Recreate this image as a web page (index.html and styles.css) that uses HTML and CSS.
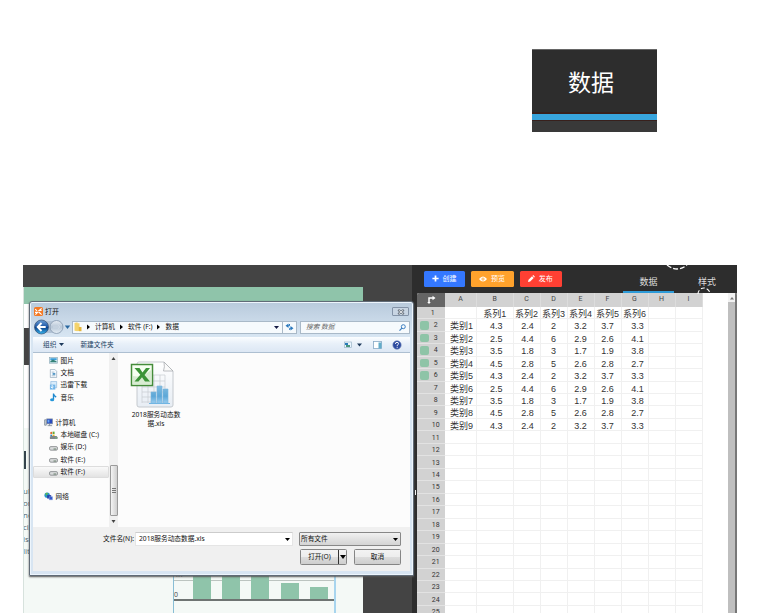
FILE: index.html
```html
<!DOCTYPE html>
<html>
<head>
<meta charset="utf-8">
<title>数据</title>
<link rel="stylesheet" href="styles.css">
</head>
<body>
<div class="callout"><div class="callout-label">数据</div><div class="callout-bar"></div></div>

<div class="app">
  <div class="canvas">
    <div class="page">
      <div class="band"></div>
      <div class="gap-a"></div>
      <div class="photo"><span></span></div>
      <div class="gap-b"></div>
      <div class="article">
        <div class="mark"></div>
        <div class="copy">ull<br>on<br>ne<br>ci,<br>is<br>lit</div>
        <div class="chart">
          <div class="plot">
            <span class="tick top">4K</span><span class="tick zero">0</span>
            <i class="b30"></i><i class="b30"></i><i class="b30"></i><i class="b16"></i><i class="b12"></i>
          </div>
        </div>
      </div>
    </div>
  </div>

  <div class="panel">
    <div class="topbar">
      <button class="btn blue"><svg width="7" height="7" viewBox="0 0 7 7"><path d="M3.5 .4v6.2M.4 3.5h6.2" stroke="#fff" stroke-width="1.7"/></svg>创建</button>
      <button class="btn orange"><svg width="8" height="6" viewBox="0 0 8 6"><path d="M0 3Q4-2 8 3Q4 8 0 3Z" fill="#fff"/><circle cx="4" cy="3" r="1.5" fill="#ffa22c"/><circle cx="4" cy="3" r=".7" fill="#fff"/></svg>预览</button>
      <button class="btn red"><svg width="7" height="7" viewBox="0 0 7 7"><path d="M0 7l.5-2.2L4 1.3l1.7 1.7-3.5 3.5zM4.5.8l.8-.7 1.6 1.6-.7.8z" fill="#fff"/></svg>发布</button>
      <div class="tab active">数据</div>
      <div class="tab plain">样式</div>
      <svg class="dashes" width="60" height="34" viewBox="0 0 60 34" fill="none" stroke="#fff"><path d="M7 0Q17 8 27 0" stroke-width="1.3" stroke-dasharray="5 2"/><path d="M38 29A6 6 0 0 1 50 29" stroke-width="1.1" stroke-dasharray="4 2"/></svg>
    </div>
    <div class="sheet-wrap">
      <div class="sheet" id="sheet"></div>
      <div class="scroll"><div class="scroll-up"><svg width="6" height="4" viewBox="0 0 6 4"><path d="M1 3.5L3 1l2 2.5z" fill="#777"/></svg></div><div class="thumb"></div></div>
    </div>
    <div class="grip"></div>
  </div>

  <div class="dialog">
    <div class="title"><svg width="9" height="9" viewBox="0 0 9 9"><rect width="9" height="9" rx="1.6" fill="#f47a25"/><path d="M1.2 2.2L3 3.8M7.6 1.4L5.2 3.4H7.6M1 5.4H3.6L1.4 7.6M4.8 5l2.8 2.6" stroke="#fff" stroke-width="1.1" fill="none"/></svg><span>打开</span>
      <div class="close"><svg width="8" height="6" viewBox="0 0 8 6"><path d="M1.2.8l5.6 4.4M6.8.8L1.2 5.2" stroke="#66707c" stroke-width="2.2"/><path d="M1.8 1.2l4.4 3.6M6.2 1.2L1.8 4.8" stroke="#fff" stroke-width=".8"/></svg></div>
    </div>
    <div class="nav">
      <svg class="arrows" width="39" height="16" viewBox="0 0 39 16">
        <defs><linearGradient id="ball" x2="0" y2="1"><stop stop-color="#6c9fd6"/><stop offset=".48" stop-color="#1d57a5"/><stop offset=".5" stop-color="#083a85"/><stop offset="1" stop-color="#37b6ef"/></linearGradient><linearGradient id="pale" x2="0" y2="1"><stop stop-color="#e7edf4"/><stop offset=".5" stop-color="#b8c7d7"/><stop offset="1" stop-color="#e5eef6"/></linearGradient></defs>
        <rect x="6" y="2" width="18" height="12" rx="6" fill="#b1c2d5"/>
        <circle cx="8.500" cy="8" r="7" fill="url(#ball)" stroke="#344d71" stroke-width=".7"/><path d="M8.500 4L4.700 8l3.800 4M5 8h7.700" stroke="#fff" stroke-width="1.9" fill="none"/>
        <circle cx="23.500" cy="8" r="6.500" fill="url(#pale)" stroke="#8497ad" stroke-width=".8"/><path d="M20 8h7M24.500 5.500L27 8l-2.500 2.500" stroke="#ced9e5" fill="none"/>
        <path d="M31.800 6.500h5.400L34.500 10z" fill="#28679f"/></svg>
      <div class="address"><svg width="8" height="10" viewBox="0 0 8 10"><path d="M.5 1l3-.8V9.2l-3-.5zM3.5 1.2h2V9h-2z" fill="#f4d36c"/><path d="M4.8 5h2.7v4.2H4.8z" fill="#e5b63d"/></svg><svg class="chev" width="3" height="6"><path d="M0 .5v5L3 3z"/></svg><span>计算机</span><svg class="chev" width="3" height="6"><path d="M0 .5v5L3 3z"/></svg><span>软件 (F:)</span><svg class="chev" width="3" height="6"><path d="M0 .5v5L3 3z"/></svg><span>数据</span><svg class="push" width="5" height="3"><path d="M0 0h5L2.5 3z" fill="#141a44"/></svg></div>
      <div class="refresh"><svg width="9" height="8" viewBox="0 0 9 8"><path d="M3.500 .5L.5 2.800l3 2.300zM5.500 3L8.500 5.200l-3 2.300z" fill="#2b79bd"/><path d="M2.500 2.800H4.500V1M6.500 5.200H4.700V7" fill="none" stroke="#2b79bd"/></svg></div>
      <div class="search"><em>搜索 数据</em><svg class="push" width="7" height="7" viewBox="0 0 7 7"><circle cx="4.3" cy="2.7" r="2" fill="none" stroke="#3e7fc1" stroke-width="1"/><path d="M2.9 4.1L.5 6.6" stroke="#3e7fc1" stroke-width="1.2"/></svg></div>
    </div>
    <div class="tools"><span>组织</span><svg class="dd" width="5" height="3"><path d="M0 0h5L2.5 3z" fill="#1e395b"/></svg><span class="newf">新建文件夹</span>
      <svg class="push" width="60" height="10" viewBox="0 0 60 10"><rect x=".5" y="2" width="7" height="5.5" fill="#e9f5ff" stroke="#9bb4c6" stroke-width=".7"/><path d="M1 3h3v2H1z" fill="#287bba"/><path d="M2 5h4v2H2z" fill="#4a967e"/><path d="M13 3.5h5L15.500 6.500z" fill="#1e395b"/><rect x="29.500" y="1.500" width="8" height="7" fill="#fff" stroke="#87a8c5" stroke-width=".8"/><rect x="34.500" y="2.500" width="3" height="6" fill="#62acc9"/><circle cx="53" cy="5" r="4.200" fill="#2d4ba0" stroke="#7186b9" stroke-width=".6"/><path d="M51.400 3.900q0-1.500 1.600-1.500t1.500 1.300q0 .8-1.300 1.700v.6M53.200 6.800v1" stroke="#fff" stroke-width="1" fill="none"/></svg>
    </div>
    <div class="body">
      <div class="tree">
        <div><svg viewBox="0 0 10 10"><rect x=".5" y="1.500" width="9" height="6.500" fill="#d8edf5" stroke="#8ba8b5" stroke-width=".7"/><path d="M1.500 2.500h7v2h-7z" fill="#3c9edb"/><path d="M1.500 7V5.500l3-1.500 4 2v1z" fill="#358278"/></svg>图片</div>
        <div><svg viewBox="0 0 10 10"><path d="M1.500.5h5l2 2v7h-7z" fill="#f7fbff" stroke="#8ba1b4" stroke-width=".7"/><path d="M3 3.500h3M3 7.500h4" stroke="#7d9db5" stroke-width=".7"/><path d="M4 4.500h3v2H4z" fill="#4e94c4"/></svg>文档</div>
        <div><svg viewBox="0 0 10 10"><path d="M2 .5h6.500v7H2z" fill="#d9ecfb" stroke="#88b4da" stroke-width=".7"/><path d="M1 4h6v5.500H1z" fill="#72b5e9"/><path d="M3.500 4.500v3M2 6.500l1.500 1.500L5 6.500" stroke="#fff" fill="none"/></svg>迅雷下载</div>
        <div><svg viewBox="0 0 10 10"><path d="M5 .5v6.500M5 1q.4 2 3 3.500" stroke="#1d88ce" stroke-width="1.500" fill="none"/><ellipse cx="3.500" cy="7.500" rx="2.300" ry="1.700" fill="#2496d9"/></svg>音乐</div>
        <div class="root space"><svg viewBox="0 0 10 10"><rect x="3" y="1" width="6.500" height="5.500" fill="#294bc0" stroke="#8895a4" stroke-width=".8"/><path d="M4 2h2v3H4z" fill="#6aa8f2"/><path d="M.7 2h1.800v6H.7zM4 8.500h5M6.200 6.500v2" stroke="#7c8894" stroke-width=".9" fill="#d8dde2"/></svg>计算机</div>
        <div><svg viewBox="0 0 10 10"><path d="M1.500 1.200l2-.5v2.700h-2z" fill="#e46a32"/><path d="M4 .7h2.200v2.700H4z" fill="#63a83b"/><path d="M1.500 4h2v2h-2z" fill="#3083ca"/><path d="M4 4h2.200v2H4z" fill="#e9b526"/><path d="M1 6.500l1-1h6.500l1 1.500v2H1z" fill="#7e868b"/><path d="M7 7.800h1.500" stroke="#63e16d"/></svg>本地磁盘 (C:)</div>
        <div><svg viewBox="0 0 10 10"><rect x=".6" y="4" width="8.800" height="4" rx="1.400" fill="#d8dadb" stroke="#777b7d" stroke-width=".8"/><path d="M5 6.700h3" stroke="#4e6a51" stroke-width=".9"/></svg>娱乐 (D:)</div>
        <div><svg viewBox="0 0 10 10"><rect x=".6" y="4" width="8.800" height="4" rx="1.400" fill="#d8dadb" stroke="#777b7d" stroke-width=".8"/><path d="M5 6.700h3" stroke="#4e6a51" stroke-width=".9"/></svg>软件 (E:)</div>
        <div class="selected"><svg viewBox="0 0 10 10"><rect x=".6" y="4" width="8.800" height="4" rx="1.400" fill="#d8dadb" stroke="#777b7d" stroke-width=".8"/><path d="M5 6.700h3" stroke="#4e6a51" stroke-width=".9"/></svg>软件 (F:)</div>
        <div class="root space"><svg viewBox="0 0 10 10"><circle cx="3.500" cy="3.500" r="3" fill="#2794c8"/><path d="M1.500 1.500q2-1.500 3 0L2.500 4.500z" fill="#5cbb50"/><path d="M3.500 3.500h4.500v3.800H3.500z" fill="#253daa"/><path d="M5.800 5.200h3.700v3.500H5.800z" fill="#3157cd" stroke="#9cb3e1" stroke-width=".5"/></svg>网络</div>
      </div>
      <div class="treebar"><svg width="5" height="3"><path d="M.5 3h4L2.500 0z" fill="#444"/></svg><div class="treethumb"><i></i><i></i><i></i></div><svg width="5" height="3"><path d="M.5 0h4L2.500 3z" fill="#444"/></svg></div>
      <div class="files">
        <svg width="46" height="48" viewBox="0 0 46 48">
          <defs><linearGradient id="doc" x2="0" y2="1"><stop stop-color="#fff"/><stop offset="1" stop-color="#e7edf4"/></linearGradient><linearGradient id="bar" x2="0" y2="1"><stop stop-color="#82bcdf"/><stop offset=".6" stop-color="#5ca7d7"/><stop offset="1" stop-color="#9acdf0"/></linearGradient></defs>
          <path d="M9 1h25l9 9v34q0 2-2 2H9q-2 0-2-2V3q0-2 2-2z" fill="url(#doc)" stroke="#c0c4c9" stroke-width=".9"/>
          <path d="M34 1q1 5-.5 9H43z" fill="#fafafa" stroke="#a9adb1" stroke-width=".8"/>
          <path d="M12 25v17M18 22v20M24 14v28M30 14v28M35 14v28M12 26h23M12 31h23M12 36h23M12 41h23M22 14h13M22 20h13" stroke="#c7ccd1" stroke-width=".7"/>
          <path d="M21 31h5v11h-5zM27 25h5v17h-5zM33 28h5v14h-5z" fill="url(#bar)" stroke="#78b5de" stroke-width=".6"/><path d="M19 42.500h21" stroke="#71b5e2"/>
          <rect x="1.500" y="3.500" width="21" height="21" fill="#f6fff1" stroke="#458c3b" stroke-width="1.500"/><path d="M3 15q9 2 18-6v14H3z" fill="#d8ecd2"/>
          <path d="M4.500 7h5l3 4.500L16 7h4l-5.500 7L20 20.500h-5l-3-4.300-3.500 4.300h-4l5.800-6.700z" fill="#3c9438"/>
        </svg>
        <p>2018服务动态数<br>据.xls</p>
      </div>
    </div>
    <div class="foot">
      <div class="line"><label>文件名(N):</label><div class="name">2018服务动态数据.xls<svg class="push" width="5" height="3"><path d="M0 0h5L2.500 3z"/></svg></div><div class="combo">所有文件<svg class="push" width="5" height="3"><path d="M0 0h5L2.500 3z"/></svg></div></div>
      <div class="line second"><div class="wbtn open"><span>打开(O)</span><i><svg width="6" height="4"><path d="M0 0h6L3 4z"/></svg></i></div><div class="wbtn cancel">取消</div></div>
    </div>
  </div>
</div>
<script src="sheet.js"></script>
</body>
</html>
```
FILE: sheet.js
```js
const sheet = document.getElementById('sheet');
const series = ['', '系列1', '系列2', '系列3', '系列4', '系列5', '系列6'];
const values = [
  [4.3, 2.4, 2, 3.2, 3.7, 3.3],
  [2.5, 4.4, 6, 2.9, 2.6, 4.1],
  [3.5, 1.8, 3, 1.7, 1.9, 3.8],
  [4.5, 2.8, 5, 2.6, 2.8, 2.7]
];

function cell(text, name) {
  const el = document.createElement('div');
  el.className = name;
  el.textContent = text;
  sheet.appendChild(el);
  return el;
}

cell('', 'corner').innerHTML = '<svg width="9" height="9" viewBox="0 0 9 9"><path d="M2 8V3h4" fill="none" stroke="#fff" stroke-width="1.5"/><path d="M5.500 .7L8.500 3l-3 2.300zM.2 7h3.600L2 9z" fill="#fff"/></svg>';
'ABCDEFGHI'.split('').forEach(c => cell(c, 'col'));
for (let r = 1; r <= 25; r++) {
  const head = cell('', 'row' + (r === 1 ? ' first' : r < 7 ? ' marked' : ''));
  head.innerHTML = '<i></i><span>' + r + '</span>';
  const data = r === 1 ? series : r <= 10 ? ['类别' + (r - 1), ...values[(r - 2) % 4]] : [];
  for (let c = 0; c < 9; c++) {
    cell(data[c] === undefined ? '' : data[c], 'cell' + (r > 1 ? ' n' + c : ''));
  }
}
```
FILE: styles.css
```css
* { box-sizing: border-box; }
body { margin: 0; width: 759px; height: 613px; overflow: hidden; background: #fff; font-family: "Liberation Sans", "Noto Sans CJK SC", sans-serif; }
svg { display: block; flex: none; }
.callout { width: 125px; height: 83px; margin: 49px 0 0 532px; background: #393939; border-top: 1px solid #666; }
.callout-label { height: 62px; background: #2d2d2d; color: #fff; font: 400 23px/62px "Noto Sans CJK SC", sans-serif; text-align: center; padding-right: 7px; }
.callout-bar { height: 9px; background: #38a4dc; border-top: 2px solid #38201c; border-bottom: 1px solid #38201c; }
.app { position: relative; display: flex; width: 714px; height: 348px; margin: 133px 0 0 23px; overflow: hidden; background: #2d2d2d; }
.canvas { width: 389px; background: #444; padding-top: 22px; }
.page { width: 339.5px; height: 326px; background: #fff; display: flex; flex-direction: column; border-left: 1px solid #d7e2dd; overflow: hidden; }
.page > div { flex: none; }
.band { height: 17px; background: #8fc4aa; }
.gap-a { height: 24px; }
.photo { height: 37px; background: #444; padding: 6px 0 0 5px; }
.photo span { display: block; width: 4px; height: 14px; background: #ddd; }
.gap-b { height: 63px; }
.article { height: 185px; background: #f4f9f6; padding-top: 23px; }
.mark { width: 2px; height: 18px; background: #35444c; }
.copy { margin-top: 16px; height: 72px; color: #53616a; font: 8px/12px "Open Sans", sans-serif; margin-left: -1px; }
.chart { width: 163px; height: 56px; margin: 0 0 0 149px; border-left: 1px solid #89bed5; border-right: 2px solid #a8d5ee; }
.plot { position: relative; display: flex; align-items: flex-end; gap: 11.200px; height: 44px; padding-left: 19px; border-bottom: 2px solid #6e7472; background: linear-gradient(#bcc4c0,#bcc4c0) 0 23px/100% 1px no-repeat; }
.plot i { width: 18px; background: #8fc4aa; }
.plot .b30 { height: 32px; } .plot .b16 { height: 16px; } .plot .b12 { height: 12px; }
.tick { position: absolute; left: 0; font: 7px/8px "Open Sans", sans-serif; color: #444; }
.tick.top { top: 14px; } .tick.zero { bottom: 0; }

.panel { position: relative; width: 325px; padding-left: 5px; background: #2d2d2d; }
.topbar { position: relative; display: flex; align-items: flex-start; height: 28px; padding: 6px 0 0 7px; }
.btn { display: flex; align-items: center; justify-content: center; gap: 4px; height: 16px; padding: 0 1px 1px 0; border: 0; border-radius: 1.500px; color: #fff; font: 7px/15px "Noto Sans CJK SC", sans-serif; }
.blue { width: 41px; background: #3478ff; margin-right: 6px; }
.orange { width: 43px; background: #ffa22c; margin-right: 6px; }
.red { width: 41.500px; background: #ff4033; }
.tab { color: #ddd; font: 9px/22px "Noto Sans CJK SC", sans-serif; text-align: center; height: 22px; }
.active { width: 51px; margin-left: 61.500px; border-bottom: 2.500px solid #2d9bd8; }
.plain { width: 30px; margin-left: 18px; }
.dashes { position: absolute; left: 243px; top: 0; z-index: 2; }
.sheet-wrap { display: flex; justify-content: space-between; height: 320px; background: #fff; overflow: hidden; border-radius: 2px 2px 0 0; }
.sheet { width: 286px; display: grid; grid-template-columns: 28px 32px 36.500px repeat(7, 27px); grid-template-rows: 13.700px repeat(25, 12.480px); align-content: start; }
.corner { display: flex; align-items: center; justify-content: center; background: #656565; }
.col { background: #d2d2d2; border-right: 1px solid #dcdcdc; color: #444; font: 400 7px/12px Roboto, sans-serif; text-align: center; }
.row { display: flex; align-items: center; background: #d2d2d2; border-bottom: 1px solid #e2e2e2; color: #333; font: 400 7px/12px Roboto, sans-serif; padding: 1px 0 0 2.500px; }
.row i { width: 9px; height: 8.500px; border-radius: 2px; }
.row.marked i { background: #8ec4a7; }
.row span { flex: 1; text-align: center; padding-right: 2px; }
.row:not(.marked) span { padding-right: 0; margin-left: -2px; }
.row.first:not(.marked) span { padding-right: 6px; }
.cell { color: #333; border-right: 1px solid #f0f0f0; border-bottom: 1px solid #f0f0f0; font: 9px/13px "Liberation Sans", "Noto Sans CJK SC", sans-serif; padding-top: 1px; text-align: center; white-space: nowrap; }
.n0 { padding-left: 2px; } .n1 { padding-left: 3px; } .n2 { padding-left: 2px; } .n6 { padding-left: 6px; }
.scroll { width: 9px; background: #bfbfbf; border-right: 2px solid #777; }
.scroll-up { height: 9px; padding: 3px 0 0 1px; background: #f2f2f2; }
.grip { position: absolute; left: 3px; top: 225px; width: 1px; height: 5px; background: #fff; }

.dialog { position: absolute; left: 6px; top: 36px; width: 385px; height: 275px; border: 1px solid #606b77; border-radius: 3px 3px 0 0; background: linear-gradient(#b8cadc, #d7e5f2 34px, #d8e5f2); box-shadow: inset 0 0 0 1px #edf5fc, 0 1px 2px #555; padding: 0 3px 4px; color: #111; font: 6.700px/10px "Noto Sans", "Noto Sans CJK SC", sans-serif; }
.title { display: flex; height: 17px; padding: 5px 1px 0 1px; gap: 2px; font-size: 7px; line-height: 9px; }
.close { margin-left: auto; width: 17px; height: 9px; border: 1px solid #8393a8; border-radius: 1px; display: grid; place-items: center; background: #c8d5e3; }
.nav { height: 16px; display: flex; align-items: center; }
.address, .refresh, .search { height: 13px; border: 1px solid #a9b9c8; background: #f6fafd; display: flex; align-items: center; }
.address { width: 211px; padding: 0 3px 0 1px; }
.chev { margin: 0 5px 0 5px; }
.refresh { width: 14px; border-left: 0; justify-content: center; }
.search { width: 110px; margin-left: 3px; padding: 0 3px 0 5px; color: #666; }
.push { margin-left: auto; }
.tools { height: 16px; margin-top: 2px; display: flex; align-items: center; padding: 0 6px 0 10px; color: #213e61; background: linear-gradient(#fbfdff, #e8f0f9 45%, #dce7f4); border-bottom: 1px solid #adbfd1; }
.dd { margin-left: 3px; }
.newf { margin-left: 16px; }
.body { display: flex; height: 174px; background: #fcfcfc; }
.tree { width: 76px; padding-top: 1.500px; }
.tree > div { display: flex; align-items: center; gap: 3px; height: 12.400px; padding-left: 15.500px; white-space: nowrap; }
.tree svg { width: 9px; height: 9px; }
.tree .root { padding-left: 10.500px; }
.tree .space { margin-top: 12.400px; }
.tree .selected { background: linear-gradient(#fafafa,#e3e3e3); border: 1px solid #ddd; border-radius: 1px; padding-left: 14.500px; }
.treebar { width: 9px; background: #f0f0f0; display: flex; flex-direction: column; align-items: center; padding: 4px 0; }
.treethumb { width: 8px; height: 51px; margin: auto 0 4px; border: 1px solid #9a9a9a; border-radius: 1px; background: linear-gradient(90deg,#f4f4f4,#cfcfcf); display: flex; flex-direction: column; align-items: center; justify-content: center; gap: 1px; }
.treethumb i { width: 4px; height: 1px; background: #777; }
.files { padding: 8px 0 0 1px; width: 75px; }
.files svg { margin-left: 11px; }
.files p { margin: 1px 0 0; text-align: center; font-size: 6.700px; line-height: 9px; white-space: nowrap; }
.foot { height: 44px; padding: 5px 9px 0 0; background: #f0f0f0; }
.line { display: flex; align-items: center; justify-content: flex-end; height: 14px; }
label { white-space: nowrap; margin-right: 1px; }
.name, .combo { display: flex; align-items: center; height: 13.500px; padding: 0 2px; border: 1px solid #aaa; }
.name { width: 158px; padding-left: 3px; background: #fff; border-color: #ccc #e5e5e5 #e5e5e5; }
.combo { width: 102px; margin-left: 6px; background: linear-gradient(#f1f1f1,#d4d4d4); border-color: #888; border-radius: 1px; padding-left: 1px; }
.second { margin-top: 4px; }
.wbtn { height: 15.500px; width: 47px; border: 1px solid #858585; border-radius: 1.500px; background: linear-gradient(#f3f3f3,#ededed 48%,#dcdcdc 52%,#cecece); display: flex; align-items: center; justify-content: center; }
.open span { flex: 1; text-align: center; }
.open i { height: 100%; width: 8px; border-left: 1px solid #333; display: grid; place-items: center; }
.cancel { margin-left: 7px; }
```
